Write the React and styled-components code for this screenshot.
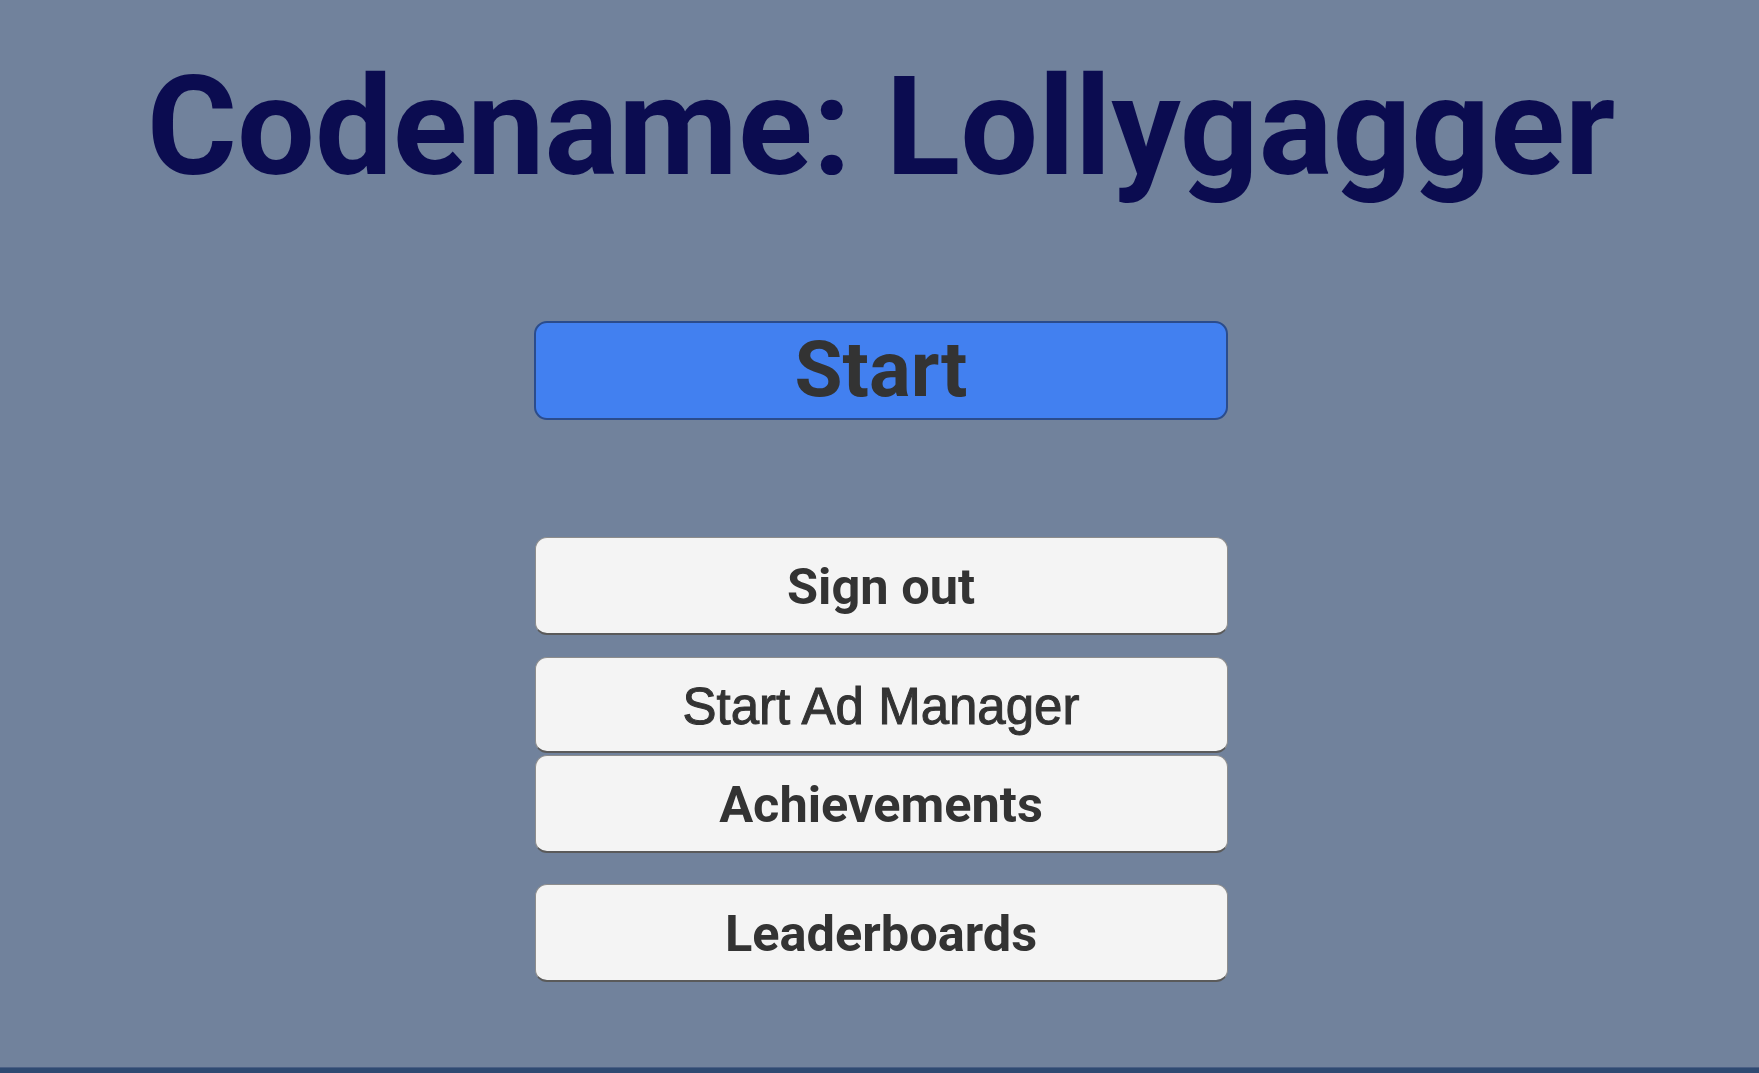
import styled, { createGlobalStyle } from "styled-components";

const GlobalStyle = createGlobalStyle`
  html, body {
    margin: 0;
    padding: 0;
    background-color: #71829c;
  }
  * {
    box-sizing: border-box;
  }
`;

const menuItems = [
  { label: "Sign out", top: 117, height: 98 },
  { label: "Start Ad Manager", top: 22, height: 96, plain: true },
  { label: "Achievements", top: 2, height: 98 },
  { label: "Leaderboards", top: 31, height: 98 },
];

const App = () => {
  return (
    <Page>
      <GlobalStyle />
      <Main>
        <Title>Codename: Lollygagger</Title>

        <StartButton>Start</StartButton>

        {menuItems.map(item => (
          <MenuButton
            key={item.label}
            $top={item.top}
            $height={item.height}
            $plain={item.plain}
          >
            {item.label}
          </MenuButton>
        ))}
      </Main>
      <BottomBar />
    </Page>
  );
};

export default App;

const Page = styled.div`
  min-height: 100vh;
  display: flex;
  flex-direction: column;
  background-color: #71829c;
`;

const Main = styled.main`
  flex: 1;
  display: flex;
  flex-direction: column;
  align-items: center;
  padding-left: 3px;
`;

const Title = styled.h1`
  margin: 57px 0 0;
  font-family: Roboto, "Liberation Sans", sans-serif;
  font-weight: 700;
  font-size: 138px;
  line-height: 141px;
  color: #0b0c50;
  white-space: nowrap;
`;

const StartButton = styled.button`
  margin-top: 123px;
  width: 694px;
  height: 99px;
  border: 2px solid #2b4c8c;
  border-radius: 13px;
  background-color: #4280f0;
  color: #333333;
  font-family: Roboto, "Liberation Sans", sans-serif;
  font-weight: 700;
  font-size: 78px;
  line-height: 1;
  padding: 0 0 2px;
  cursor: pointer;
`;

const MenuButton = styled.button`
  margin-top: ${props => props.$top}px;
  width: 693px;
  height: ${props => props.$height}px;
  border: 1px solid #8d8d8d;
  border-bottom: 2px solid #5a5a5a;
  border-radius: 12px;
  background-color: #f4f4f4;
  color: #333333;
  font-family: ${props =>
    props.$plain
      ? `"Liberation Sans", Arial, sans-serif`
      : `Roboto, "Liberation Sans", sans-serif`};
  font-weight: ${props => (props.$plain ? 400 : 700)};
  font-size: ${props => (props.$plain ? "51px" : "50.5px")};
  -webkit-text-stroke: ${props => (props.$plain ? "1px #333333" : "0")};
  line-height: 1;
  padding: 3px 0 0;
  cursor: pointer;
`;

const BottomBar = styled.div`
  height: 6px;
  background-color: #2f4a72;
  border-top: 1px solid #4a5f84;
`;
